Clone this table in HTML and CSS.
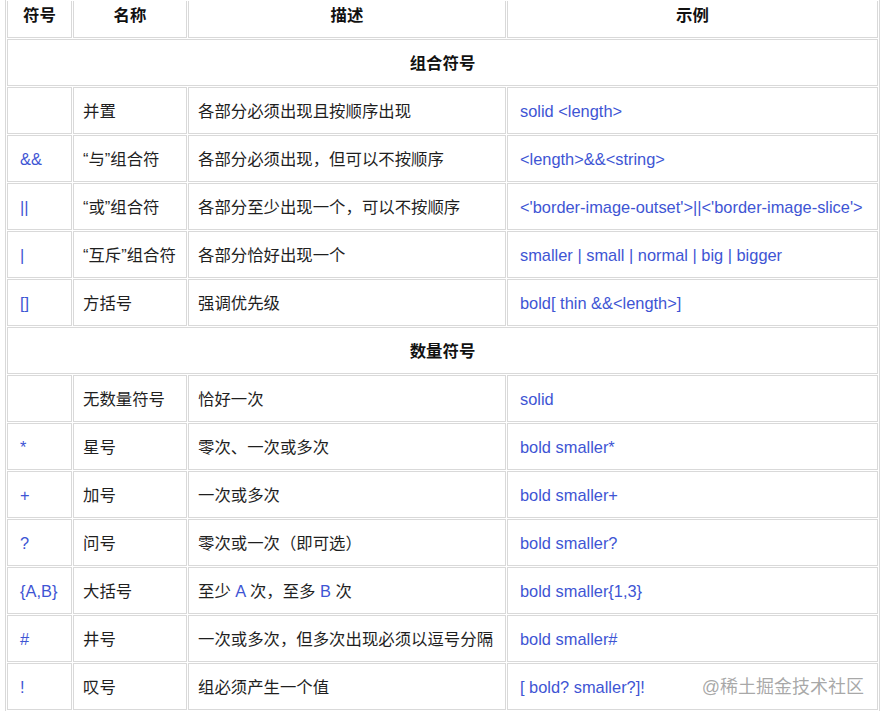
FILE: index.html
```html
<!DOCTYPE html>
<html lang="zh-CN">
<head>
<meta charset="utf-8">
<title>CSS 值定义语法</title>
<link rel="stylesheet" href="styles.css">
</head>
<body>
<table class="syntax-table">
  <colgroup>
    <col class="c1"><col class="c2"><col class="c3"><col class="c4">
  </colgroup>
  <thead>
    <tr><th>符号</th><th>名称</th><th>描述</th><th>示例</th></tr>
  </thead>
  <tbody>
    <tr class="section"><td colspan="4">组合符号</td></tr>
    <tr><td class="sym"></td><td class="cjk">并置</td><td class="cjk">各部分必须出现且按顺序出现</td><td class="ex">solid &lt;length&gt;</td></tr>
    <tr><td class="sym">&amp;&amp;</td><td class="cjk">“与”组合符</td><td class="cjk">各部分必须出现，但可以不按顺序</td><td class="ex">&lt;length&gt;&amp;&amp;&lt;string&gt;</td></tr>
    <tr><td class="sym">||</td><td class="cjk">“或”组合符</td><td class="cjk">各部分至少出现一个，可以不按顺序</td><td class="ex">&lt;'border-image-outset'&gt;||&lt;'border-image-slice'&gt;</td></tr>
    <tr><td class="sym">|</td><td class="cjk">“互斥”组合符</td><td class="cjk">各部分恰好出现一个</td><td class="ex">smaller | small | normal | big | bigger</td></tr>
    <tr><td class="sym">[]</td><td class="cjk">方括号</td><td class="cjk">强调优先级</td><td class="ex">bold[ thin &amp;&amp;&lt;length&gt;]</td></tr>
    <tr class="section"><td colspan="4">数量符号</td></tr>
    <tr><td class="sym"></td><td class="cjk">无数量符号</td><td class="cjk">恰好一次</td><td class="ex">solid</td></tr>
    <tr><td class="sym">*</td><td class="cjk">星号</td><td class="cjk">零次、一次或多次</td><td class="ex">bold smaller*</td></tr>
    <tr><td class="sym">+</td><td class="cjk">加号</td><td class="cjk">一次或多次</td><td class="ex">bold smaller+</td></tr>
    <tr><td class="sym">?</td><td class="cjk">问号</td><td class="cjk">零次或一次（即可选）</td><td class="ex">bold smaller?</td></tr>
    <tr><td class="sym">{A,B}</td><td class="cjk">大括号</td><td class="cjk">至少 <span class="blue">A</span> 次，至多 <span class="blue">B</span> 次</td><td class="ex">bold smaller{1,3}</td></tr>
    <tr><td class="sym">#</td><td class="cjk">井号</td><td class="cjk">一次或多次，但多次出现必须以逗号分隔</td><td class="ex">bold smaller#</td></tr>
    <tr><td class="sym">!</td><td class="cjk">叹号</td><td class="cjk">组必须产生一个值</td><td class="ex last">[ bold? smaller?]!<span class="watermark">@稀土掘金技术社区</span></td></tr>
  </tbody>
</table>
</body>
</html>
```

FILE: styles.css
```css
html, body {
  margin: 0;
  padding: 0;
  background: #ffffff;
}

body {
  font-family: "Liberation Sans", "Noto Sans CJK SC", sans-serif;
  font-size: 16.4px;
  color: #1f1f1f;
  overflow: hidden;
}

.syntax-table {
  margin-left: 5px;
  width: 875px;
  table-layout: fixed;
  border-collapse: separate;
  border-spacing: 1px;
  border-left: 1px solid #d9d9d9;
  border-right: 1px solid #d9d9d9;
}

.c1 { width: 65px; }
.c2 { width: 114px; }
.c3 { width: 318px; }
.c4 { width: 371px; }

.syntax-table th,
.syntax-table td {
  border: 1px solid #d9d9d9;
  line-height: 20px;
  white-space: nowrap;
}

.syntax-table th {
  border-top: none;
  font-weight: bold;
  text-align: center;
  color: #111111;
  padding: 4px 0 12px;
  height: 20px;
}

.syntax-table td {
  padding: 0 0 0 12px;
  height: 45px;
  vertical-align: middle;
}

.syntax-table td.cjk {
  padding-left: 9px;
}

.section td {
  text-align: center;
  font-weight: bold;
  color: #111111;
}

.syntax-table .section td {
  padding: 0;
}

.sym,
.ex,
.blue {
  color: #3e55d4;
}

.last {
  position: relative;
}

.watermark {
  position: absolute;
  right: 13px;
  top: 12px;
  font-size: 18px;
  line-height: 22px;
  color: rgba(140, 140, 140, 0.75);
  text-shadow: 0 0 1px rgba(255, 255, 255, 0.9);
}
```
